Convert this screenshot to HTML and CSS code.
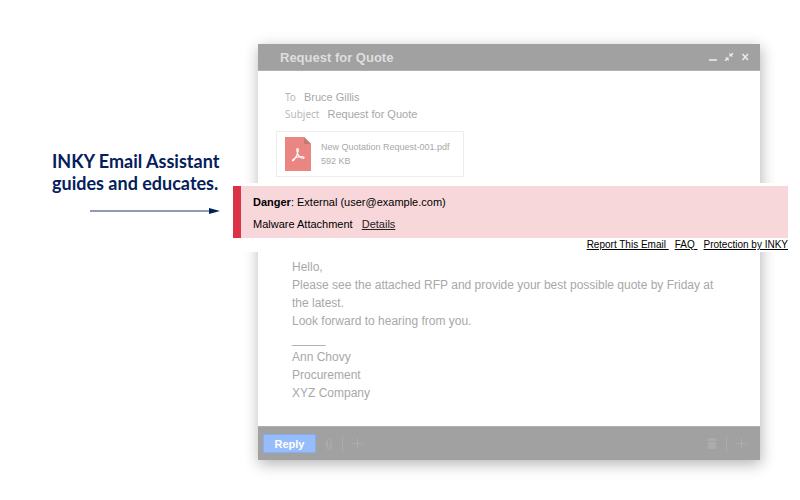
FILE: index.html
```html
<!DOCTYPE html>
<html lang="en">
<head>
<meta charset="utf-8">
<title>INKY Email Assistant</title>
<link rel="stylesheet" href="styles.css">
</head>
<body>
<main class="stage">
  <aside class="callout">
    <h1 class="callout-text">INKY Email Assistant<br>guides and educates.</h1>
    <svg class="callout-arrow" viewBox="0 0 130 8" width="130" height="8" aria-hidden="true">
      <path d="M0 4H120" stroke="#8e9ab8" stroke-width="2"/>
      <path d="M119 1L130 4L119 7Z" fill="#04205c"/>
    </svg>
  </aside>
  <article class="mail">
    <header class="mail-header">
      <h2 class="mail-title">Request for Quote</h2>
      <div class="window-controls">
        <button type="button" aria-label="Minimize"><svg viewBox="0 0 10 10" width="10" height="10"><path d="M1 8H9" stroke="#dcdcdc" stroke-width="2"/></svg></button>
        <button type="button" aria-label="Restore"><svg viewBox="0 0 10 10" width="10" height="10"><path d="M5.4 .8V4.6H9.2L7.8 3.4L9.4 1.7L8.4 .7L6.7 2.3ZM4.6 9.2V5.4H.8L2.2 6.6L.6 8.3L1.6 9.3L3.3 7.7Z" fill="currentColor"/></svg></button>
        <button type="button" aria-label="Close"><svg viewBox="0 0 10 10" width="10" height="10"><path d="M2.5 2L8 8M8 2L2.5 8" stroke="currentColor" stroke-width="1.5"/></svg></button>
      </div>
    </header>
    <div class="envelope">
      <dl class="fields">
        <div class="field"><dt>To</dt><dd>Bruce Gillis</dd></div>
        <div class="field"><dt>Subject</dt><dd>Request for Quote</dd></div>
      </dl>
      <div class="attachment">
        <svg viewBox="0 0 26 34" width="26" height="34" aria-hidden="true">
          <path d="M0 0H19L26 7V34H0Z" fill="#e98682"/>
          <path d="M19 0L26 7H19Z" fill="#c27a77"/>
          <path d="M12.6 11.5C11 11.5 12 15 13 17.2C14.2 20 16.5 21.3 18.4 21.2C19.8 21 19 19.3 16 19.5C13 19.6 9.8 20.7 8 22.3C6.6 23.8 8 24.7 9.5 22.2C11.3 19.5 12.5 16.8 13.1 14.3C13.5 12.7 13.4 11.6 12.6 11.5Z" fill="none" stroke="#fff" stroke-width="1.1"/>
        </svg>
        <div class="file"><span>New Quotation Request-001.pdf</span><span>592 KB</span></div>
      </div>
    </div>
    <section class="banner">
      <div class="alert">
        <p><strong>Danger</strong>: External (user@example.com)</p>
        <p>Malware Attachment <a class="details" href="#details">Details</a></p>
      </div>
      <nav class="banner-links">
        <a href="#report">Report This Email&nbsp;</a>
        <a href="#faq">FAQ&nbsp;</a>
        <a href="#inky">Protection by INKY</a>
      </nav>
    </section>
    <div class="message">
      <p>Hello,</p>
      <p>Please see the attached RFP and provide your best possible quote by Friday at<br>the latest.</p>
      <p>Look forward to hearing from you.</p>
      <p>_____</p>
      <p>Ann Chovy</p>
      <p>Procurement</p>
      <p>XYZ Company</p>
    </div>
    <footer class="toolbar">
      <button type="button" class="reply">Reply</button>
      <button type="button" class="tool" aria-label="Attach"><svg viewBox="0 0 8 12" width="8" height="12"><path d="M1.5 3V9A2.5 2.5 0 0 0 6.5 9V3A2 2 0 0 0 2.5 3V8.5A1.4 1.4 0 0 0 5 8.5V4" fill="none" stroke="currentColor"/></svg></button>
      <span class="divider"></span>
      <button type="button" class="tool" aria-label="More formatting"><svg viewBox="0 0 11 11" width="11" height="11"><path d="M5.5 0V11M0 5.5H11" stroke="currentColor"/></svg></button>
      <span class="spacer"></span>
      <button type="button" class="tool" aria-label="Delete"><svg viewBox="0 0 10 12" width="10" height="12"><path d="M0 1H3V0H7V1H10V3H0ZM1 4H9V11H1Z" fill="currentColor"/></svg></button>
      <span class="divider"></span>
      <button type="button" class="tool" aria-label="More options"><svg viewBox="0 0 11 11" width="11" height="11"><path d="M5.5 0V11M0 5.5H11" stroke="currentColor"/></svg></button>
    </footer>
  </article>
</main>
</body>
</html>
```
FILE: styles.css
```css
* {
  box-sizing: border-box;
}

body {
  margin: 0;
  background: #fff;
  font-family: "Liberation Sans", Arial, sans-serif;
}

h1, h2, p, dl, dd {
  margin: 0;
}

button {
  padding: 0;
  border: 0;
  background: none;
  color: inherit;
  font: inherit;
}

svg {
  display: block;
  flex: none;
}

.stage {
  display: grid;
  grid-template-columns: 180px 1fr;
  column-gap: 26px;
  align-items: start;
  padding: 44px 40px 40px 52px;
}

.callout {
  padding-top: 106px;
}

.callout-text {
  color: #04205c;
  font: bold 18px/22px Lato, sans-serif;
  white-space: nowrap;
}

.callout-arrow {
  margin: 13px 0 0 38px;
}

.mail {
  background: #fff;
  box-shadow: 1px 4px 14px rgba(0, 0, 0, 0.3);
}

.mail-header {
  display: flex;
  align-items: center;
  justify-content: space-between;
  height: 27px;
  padding: 0 10px 0 22px;
  background: #a1a1a1;
  border-bottom: 1px solid #b0b0b0;
}

.mail-title {
  color: #dedede;
  font-size: 13px;
}

.window-controls {
  display: flex;
  gap: 6px;
  color: #ececec;
}

.envelope {
  padding: 17px 18px 6px;
}

.field {
  display: flex;
  gap: 8px;
  height: 17px;
  margin-left: 9px;
  line-height: 18px;
}

.field dt {
  color: #b8b8b8;
  font-family: "Noto Sans", sans-serif;
  font-size: 10px;
}

.field dd {
  color: #a8a8a8;
  font-size: 11px;
}

.attachment {
  display: flex;
  align-items: center;
  gap: 10px;
  width: 188px;
  height: 46px;
  margin-top: 9px;
  padding-left: 8px;
  border: 1px solid #ededed;
}

.file {
  display: grid;
  color: #a8a8a8;
  font-size: 9px;
  line-height: 14px;
  white-space: nowrap;
}

.banner {
  position: relative;
  margin: 0 -28px 0 -25px;
  padding-top: 3px;
  background: #fff;
}

.alert {
  display: grid;
  gap: 8px;
  padding: 9px 12px 7px;
  border-left: 8px solid #dc3246;
  background: #f8d7da;
  color: #000;
  font-size: 11px;
  line-height: 14px;
}

.details {
  margin-left: 6px;
  color: #222;
}

.banner-links {
  display: flex;
  justify-content: flex-end;
  gap: 6px;
  height: 14px;
  font-size: 10px;
  line-height: 14px;
}

.banner-links a {
  color: #000;
}

.message {
  padding: 6px 34px 24px;
  color: #a8a8a8;
  font-size: 12px;
  line-height: 18px;
}

.toolbar {
  display: flex;
  align-items: center;
  gap: 9px;
  height: 34px;
  padding: 0 13px 0 5px;
  background: #a1a1a1;
  border-top: 1px solid #b0b0b0;
}

.reply {
  width: 53px;
  height: 19px;
  border: 1px solid #85aef0;
  border-radius: 1px;
  background: #97bcfc;
  color: #fff;
  font-size: 11px;
  font-weight: bold;
}

.tool {
  color: #acacac;
}

.divider {
  width: 1px;
  height: 16px;
  background: #acacac;
}

.spacer {
  flex: 1;
}
```
